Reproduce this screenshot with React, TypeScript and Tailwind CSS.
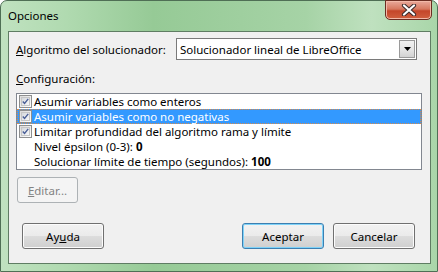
const font = { fontFamily: '"Noto Sans", "Open Sans", sans-serif' }

function Check({ checked = true }: { checked?: boolean }) {
  return (
    <span className="flex h-[13px] w-[13px] shrink-0 items-center justify-center border border-[#8e8f8f] bg-[linear-gradient(135deg,#dcdcdc,#ffffff)]">
      <span className="flex h-[9px] w-[9px] items-center justify-center border border-[#c6c6c6] bg-[linear-gradient(135deg,#d5d8dd,#f7f8f9)]">
        {checked && (
          <svg width="9" height="9" viewBox="0 0 9 9">
            <path d="M1 4.5 L3.3 7 L8 1.2" fill="none" stroke="#4a5f97" strokeWidth="1.8" />
          </svg>
        )}
      </span>
    </span>
  )
}

function Button({ children, primary = false, width = 'w-[82px]' }: { children: React.ReactNode; primary?: boolean; width?: string }) {
  return (
    <div
      className={`flex h-[26px] ${width} items-center justify-center rounded-[3px] border ${
        primary ? 'border-[#3c7fb1] shadow-[inset_0_0_0_1px_#7ed2f8]' : 'border-[#707070] shadow-[inset_0_0_0_1px_#fcfcfc]'
      } bg-[linear-gradient(#f2f2f2_0%,#ebebeb_49%,#dddddd_50%,#cfcfcf_100%)] text-[11.5px] leading-[15px] text-black`}
    >
      {children}
    </div>
  )
}

export default function App() {
  return (
    <div className="h-[272px] w-[438px] bg-white" style={font}>
      <div className="flex h-full w-full flex-col rounded-t-[7px] border border-[#4f6f55] bg-[linear-gradient(90deg,#c0e2c0_0%,#b0dab0_15%,#96ca96_35%,#9fcf9f_55%,#a6d3a6_70%,#bfe1bf_85%,#a9d6a9_100%)]">
        <div className="flex h-[30px] shrink-0 items-start justify-between">
          <span className="mt-[7px] ml-[7px] text-[11.5px] leading-[15px] text-black">Opciones</span>
          <div className="mr-[5px] mt-[-1px] flex h-[20px] w-[47px] items-center justify-center rounded-b-[5px] border border-[#6b2d22] bg-[linear-gradient(#e9a99b_0%,#d6785f_45%,#c4462a_55%,#d0603f_100%)] shadow-[inset_0_0_0_1px_#f2b9a8]">
            <svg width="16" height="12" viewBox="0 0 16 12">
              <path d="M3 1.5 L13 10.5 M13 1.5 L3 10.5" stroke="#3b2a2a" strokeWidth="4.2" strokeLinecap="round" />
              <path d="M3 1.5 L13 10.5 M13 1.5 L3 10.5" stroke="#ffffff" strokeWidth="2.2" strokeLinecap="round" />
            </svg>
          </div>
        </div>
        <div className="mb-[7px] ml-[7px] mr-[6px] flex flex-1 flex-col border border-[#5f7d63] bg-[#f0f0f0] pl-[7px] pr-[8px] pt-[6px] text-[11.5px] leading-[15px] text-black">
          <div className="flex h-[22px] items-center pr-[5px]">
            <span>
              <span className="underline">A</span>lgoritmo del solucionador:
            </span>
            <div className="ml-auto flex h-[22px] w-[241px] items-center border border-[#7a7a7a] bg-white pl-[3px]">
              <span className="flex-1">Solucionador lineal de LibreOffice</span>
              <div className="mr-[1px] flex h-[18px] w-[16px] items-center justify-center border border-[#9a9a9a] bg-[linear-gradient(#f2f2f2_0%,#e6e6e6_50%,#d2d2d2_100%)]">
                <svg width="7" height="4" viewBox="0 0 7 4">
                  <path d="M0 0 H7 L3.5 4 Z" fill="#000" />
                </svg>
              </div>
            </div>
          </div>
          <div className="mt-[11px] h-[15px]">
            <span className="underline">C</span>onfiguración:
          </div>
          <div className="mt-[7px] flex h-[77px] flex-col border border-[#828790] bg-white">
            <div className="flex h-[15px] items-center gap-[2px] pl-[2px]">
              <Check />
              <span>Asumir variables como enteros</span>
            </div>
            <div className="flex h-[15px] items-center gap-[2px] border border-dotted border-[#d98b4a] bg-[#3399ff] pl-[1px] text-white">
              <Check />
              <span>Asumir variables como no negativas</span>
            </div>
            <div className="flex h-[15px] items-center gap-[2px] pl-[2px]">
              <Check />
              <span>Limitar profundidad del algoritmo rama y límite</span>
            </div>
            <div className="h-[15px] pl-[17px]">
              Nivel épsilon (0-3): <b>0</b>
            </div>
            <div className="h-[15px] pl-[17px]">
              Solucionar límite de tiempo (segundos): <b>100</b>
            </div>
          </div>
          <div className="ml-[1px] mt-[7px] flex h-[26px] w-[61px] items-center justify-center rounded-[3px] border border-[#adb2b5] bg-[#f4f4f4] text-[#838383]">
            <span>
              <span className="underline">E</span>ditar...
            </span>
          </div>
          <div className="mt-[20px] flex items-center pl-[6px] pr-[7px]">
            <Button>
              <span>
                Ay<span className="underline">u</span>da
              </span>
            </Button>
            <div className="ml-auto flex gap-[9px]">
              <Button primary>Aceptar</Button>
              <Button>Cancelar</Button>
            </div>
          </div>
        </div>
      </div>
    </div>
  )
}
